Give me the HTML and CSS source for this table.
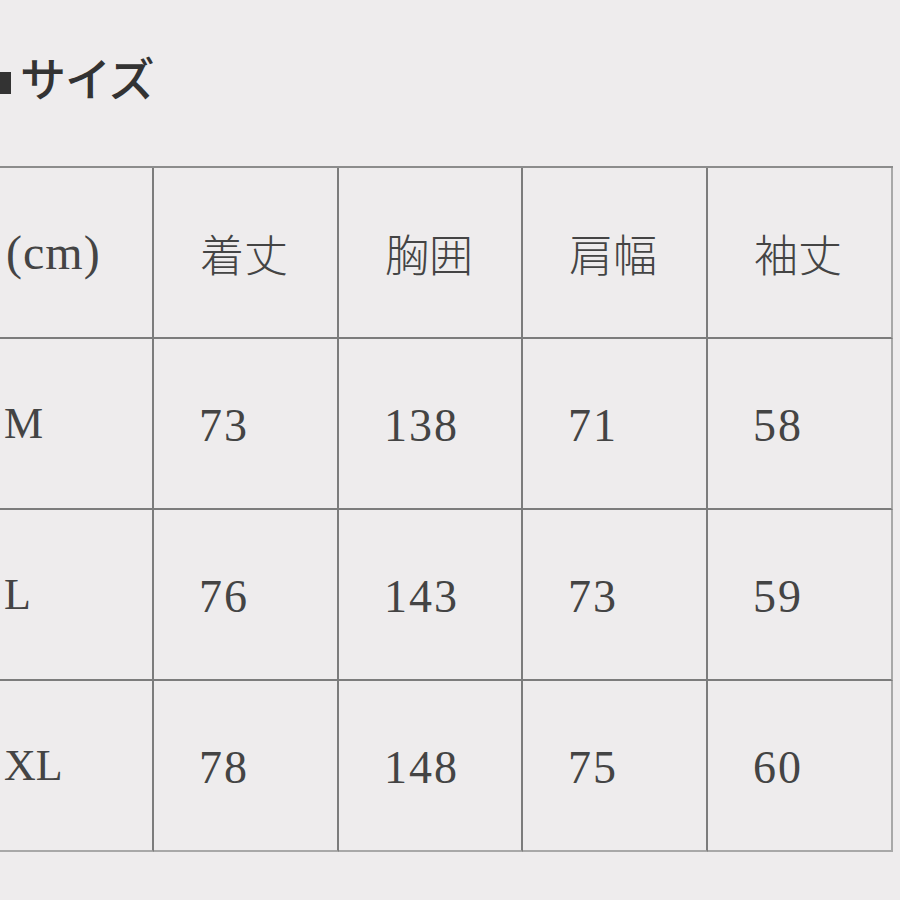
FILE: index.html
```html
<!DOCTYPE html>
<html lang="ja">
<head>
<meta charset="utf-8">
<link rel="stylesheet" href="styles.css">
</head>
<body>
<div class="page">
  <h1 class="title"><span class="mark"></span><span class="title-text">サイズ</span></h1>
  <div class="table">
    <div class="cell first unit">(cm)</div>
    <div class="cell jp">着丈</div>
    <div class="cell jp">胸囲</div>
    <div class="cell jp">肩幅</div>
    <div class="cell jp last-col">袖丈</div>

    <div class="cell first">M</div>
    <div class="cell num">73</div>
    <div class="cell num">138</div>
    <div class="cell num">71</div>
    <div class="cell num last-col">58</div>

    <div class="cell first">L</div>
    <div class="cell num">76</div>
    <div class="cell num">143</div>
    <div class="cell num">73</div>
    <div class="cell num last-col">59</div>

    <div class="cell first last-row">XL</div>
    <div class="cell num last-row">78</div>
    <div class="cell num last-row">148</div>
    <div class="cell num last-row">75</div>
    <div class="cell num last-col last-row">60</div>
  </div>
</div>
</body>
</html>
```

FILE: styles.css
```css
html, body {
  margin: 0;
  padding: 0;
  background: #eeeced;
}
.page {
  width: 900px;
  height: 900px;
  overflow: hidden;
  color: #444;
  font-family: "Liberation Serif", "Noto Sans CJK JP", serif;
}
.title {
  margin: 0;
  height: 166px;
  display: flex;
  align-items: flex-start;
  padding-top: 48px;
  box-sizing: border-box;
  font-family: "Noto Sans CJK JP", sans-serif;
  font-weight: 500;
  font-size: 46px;
  line-height: 56px;
  color: #333;
}
.mark {
  width: 11px;
  height: 22px;
  background: #333;
  margin-top: 24px;
  margin-right: 9px;
}
.title-text {
  letter-spacing: -1px;
}
.table {
  display: grid;
  grid-template-columns: 154px 185px 184px 185px 185px;
  grid-auto-rows: 171px;
  border-top: 2px solid #8c8c8c;
  width: 893px;
  box-sizing: border-box;
}
.cell {
  border-right: 2px solid #7c7c7c;
  border-bottom: 2px solid #7c7c7c;
  display: flex;
  align-items: center;
  padding-left: 45px;
  box-sizing: border-box;
  font-size: 46px;
}
.cell.first {
  padding-left: 4px;
  font-size: 44px;
}
.cell.first.unit {
  font-size: 48px;
  padding-left: 6px;
  letter-spacing: 1px;
}
.cell.num {
  letter-spacing: 2px;
  padding-top: 4px;
}
.cell.jp {
  font-family: "Noto Sans CJK JP", sans-serif;
  font-weight: 300;
  font-size: 44px;
  letter-spacing: 0;
  padding-left: 46px;
}
.cell.last-col {
  border-right-color: #a8a8a8;
}
.cell.last-row {
  border-bottom-color: #a8a8a8;
}
```
